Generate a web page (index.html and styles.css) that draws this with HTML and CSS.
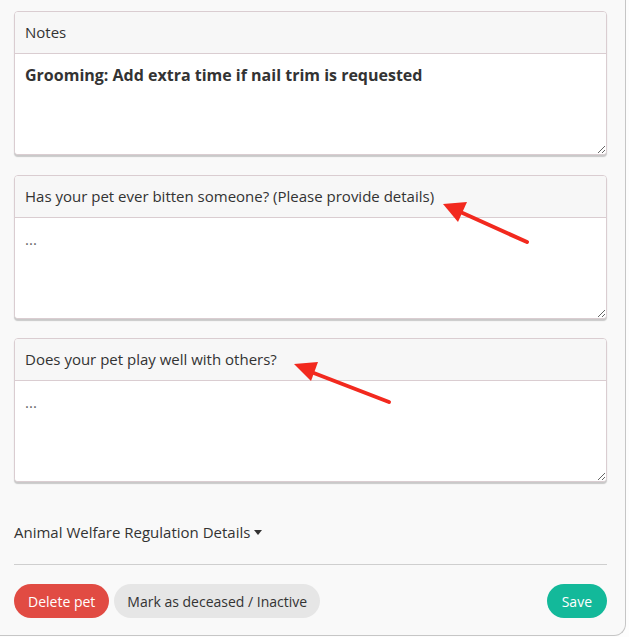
FILE: index.html
```html
<!DOCTYPE html>
<html>
<head>
<meta charset="utf-8">
<link rel="stylesheet" href="styles.css">
</head>
<body>
<div class="panel">
  <div class="card">
    <div class="card-head">Notes</div>
    <textarea class="card-body strong">Grooming: Add extra time if nail trim is requested</textarea>
  </div>
  <div class="card card-tight">
    <div class="card-head">Has your pet ever bitten someone? (Please provide details)</div>
    <textarea class="card-body muted">...</textarea>
  </div>
  <div class="card">
    <div class="card-head">Does your pet play well with others?</div>
    <textarea class="card-body muted">...</textarea>
  </div>
  <div class="toggle">Animal Welfare Regulation Details <span class="caret"></span></div>
  <div class="actions">
    <button class="btn btn-danger">Delete pet</button>
    <button class="btn btn-light">Mark as deceased / Inactive</button>
    <span class="spacer"></span>
    <button class="btn btn-save">Save</button>
  </div>
  <svg class="arrows" width="626" height="637" viewBox="0 0 626 637">
    <line x1="527" y1="242" x2="456" y2="210" stroke="#f2291e" stroke-width="4" stroke-linecap="round"/>
    <polygon points="443,204 467,202 458,222" fill="#f2291e"/>
    <line x1="389" y1="402" x2="306" y2="370" stroke="#f2291e" stroke-width="4" stroke-linecap="round"/>
    <polygon points="294,364 318,362 311,381" fill="#f2291e"/>
  </svg>
</div>
</body>
</html>
```
FILE: styles.css
```css
html, body {
  margin: 0;
  padding: 0;
  background: #fdfdfd;
}
body {
  font-family: "Open Sans", "Liberation Sans", sans-serif;
  font-size: 15px;
  color: #333;
}
.panel {
  position: relative;
  width: 593px;
  padding: 11px 18px 17px 14px;
  background: #f9f9f9;
  border-right: 1px solid #c6c6c6;
  border-bottom: 1px solid #c6c6c6;
  border-bottom-right-radius: 12px;
}
.card {
  display: flex;
  flex-direction: column;
  border: 1px solid #dacdd1;
  border-radius: 4px;
  background: #fff;
  box-shadow: 0 2px 1px #c9c9c9;
  margin-bottom: 20px;
  overflow: hidden;
}
.card-tight {
  margin-bottom: 19px;
}
.card-head {
  background: #f7f7f7;
  padding: 10px 10px;
  line-height: 21px;
  border-bottom: 1px solid #dacdd1;
  color: #333;
}
.card-body {
  display: block;
  box-sizing: border-box;
  width: 100%;
  height: 100px;
  border: 0;
  margin: 0;
  padding: 11px 10px;
  font-family: "Open Sans", "Liberation Sans", sans-serif;
  font-size: 15px;
  line-height: 20px;
  color: #333;
  background: #fff;
  resize: vertical;
  outline: none;
}
.strong {
  font-weight: 700;
  font-size: 16px;
}
.muted {
  color: #666;
}
.toggle {
  margin-top: 40px;
  line-height: 20px;
  padding-bottom: 22px;
  border-bottom: 1px solid #cfcfcf;
  color: #333;
}
.caret {
  display: inline-block;
  width: 0;
  height: 0;
  border-left: 4px solid transparent;
  border-right: 4px solid transparent;
  border-top: 5px solid #333;
  vertical-align: 3px;
}
.actions {
  display: flex;
  gap: 5px;
  margin-top: 19px;
}
.spacer {
  flex: 1;
}
.btn {
  height: 34px;
  border: 0;
  border-radius: 17px;
  padding: 0 13px;
  font-family: "Open Sans", "Liberation Sans", sans-serif;
  font-size: 14px;
}
.btn-danger {
  background: #e14b43;
  color: #fff;
  padding: 0 14px;
}
.btn-light {
  background: #e6e6e6;
  color: #333;
}
.btn-save {
  background: #13b99a;
  color: #fff;
  padding: 0 15px;
}
.arrows {
  position: absolute;
  left: 0;
  top: 0;
  pointer-events: none;
}
```
